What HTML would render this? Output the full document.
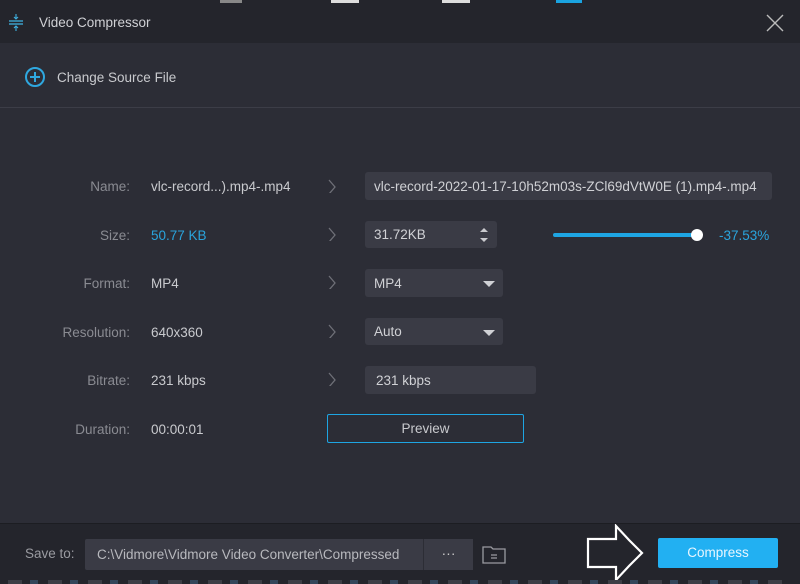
<!DOCTYPE html>
<html><head><meta charset="utf-8"><style>
*{margin:0;padding:0;box-sizing:border-box}
body{width:800px;height:584px;overflow:hidden;background:#2c2d36;font-family:"Liberation Sans",sans-serif;position:relative;color:#c9cace}
.abs{position:absolute}
.top{left:0;top:0;width:800px;height:43px;background:#24252c}
.lbl{font-size:13.5px;color:#8a8b92;text-align:right;width:130px;left:0}
.val{font-size:13.5px;color:#c9cace;left:151px}
.chev{left:327px;width:10px;height:14px}
.box{background:#3a3b45;border-radius:3px;font-size:13.5px;color:#d0d1d5;padding-left:9px;display:flex;align-items:center}
.tri{position:absolute;right:8px;top:12px;width:0;height:0;border-left:6px solid transparent;border-right:6px solid transparent;border-top:6px solid #d0d1d5}
</style></head><body>
<div class="abs top"></div>
<div class="abs" style="left:220px;top:0;width:22px;height:3px;background:#888"></div>
<div class="abs" style="left:331px;top:0;width:28px;height:3px;background:#ddd"></div>
<div class="abs" style="left:442px;top:0;width:28px;height:3px;background:#ddd"></div>
<div class="abs" style="left:556px;top:0;width:26px;height:3px;background:#1aa3e0"></div>
<svg class="abs" style="left:8px;top:12px" width="16" height="20"><line x1="1" y1="9" x2="15" y2="9" stroke="#3fb0e0" stroke-width="1.3"/><line x1="1" y1="12" x2="15" y2="12" stroke="#3fb0e0" stroke-width="1.3"/><path d="M8 2v5M6 5l2 2 2-2M8 19v-5M6 16l2-2 2 2" stroke="#3fb0e0" fill="none" stroke-width="1.1"/></svg>
<div class="abs" style="left:39px;top:15px;font-size:13.5px;color:#d0d1d5">Video Compressor</div>
<svg class="abs" style="left:766px;top:14px" width="18" height="18"><path d="M1 1L17 17M17 1L1 17" stroke="#bbb" stroke-width="1.4"/></svg>
<div class="abs" style="left:0;top:107px;width:800px;height:1px;background:#3c3d47"></div>
<svg class="abs" style="left:24px;top:66px" width="22" height="22"><circle cx="11" cy="11" r="9" stroke="#2fa8e0" stroke-width="2" fill="none"/><path d="M11 6v10M6 11h10" stroke="#2fa8e0" stroke-width="2"/></svg>
<div class="abs" style="left:57px;top:70px;font-size:13.5px;color:#c9cace">Change Source File</div>

<div class="abs lbl" style="top:179px">Name:</div><div class="abs val" style="top:179px">vlc-record...).mp4-.mp4</div>
<div class="abs lbl" style="top:228px">Size:</div><div class="abs val" style="top:228px;color:#2aa4dc">50.77 KB</div>
<div class="abs lbl" style="top:276px">Format:</div><div class="abs val" style="top:276px">MP4</div>
<div class="abs lbl" style="top:325px">Resolution:</div><div class="abs val" style="top:325px">640x360</div>
<div class="abs lbl" style="top:373px">Bitrate:</div><div class="abs val" style="top:373px">231 kbps</div>
<div class="abs lbl" style="top:422px">Duration:</div><div class="abs val" style="top:422px">00:00:01</div>

<svg class="abs chev" style="top:179px" width="10" height="16"><path d="M2 1l6 7-6 7" stroke="#6e6f77" fill="none" stroke-width="1.3"/></svg>
<svg class="abs chev" style="top:227px" width="10" height="16"><path d="M2 1l6 7-6 7" stroke="#6e6f77" fill="none" stroke-width="1.3"/></svg>
<svg class="abs chev" style="top:275px" width="10" height="16"><path d="M2 1l6 7-6 7" stroke="#6e6f77" fill="none" stroke-width="1.3"/></svg>
<svg class="abs chev" style="top:324px" width="10" height="16"><path d="M2 1l6 7-6 7" stroke="#6e6f77" fill="none" stroke-width="1.3"/></svg>
<svg class="abs chev" style="top:372px" width="10" height="16"><path d="M2 1l6 7-6 7" stroke="#6e6f77" fill="none" stroke-width="1.3"/></svg>

<div class="abs box" style="left:365px;top:172px;width:407px;height:28px;white-space:nowrap;overflow:hidden">vlc-record-2022-01-17-10h52m03s-ZCl69dVtW0E (1).mp4-.mp4</div>
<div class="abs box" style="left:365px;top:221px;width:132px;height:27px">31.72KB
<svg style="position:absolute;right:8px;top:6px" width="10" height="16"><path d="M1 5l4-4 4 4zM1 11l4 4 4-4z" fill="#c9cace"/></svg></div>
<div class="abs" style="left:553px;top:233px;width:144px;height:4px;background:#1ea5e3;border-radius:2px"></div>
<div class="abs" style="left:691px;top:229px;width:12px;height:12px;background:#fff;border-radius:50%"></div>
<div class="abs" style="left:719px;top:228px;font-size:13.5px;color:#2aa4dc">-37.53%</div>
<div class="abs box" style="left:365px;top:269px;width:138px;height:28px">MP4<span class="tri"></span></div>
<div class="abs box" style="left:365px;top:318px;width:138px;height:27px">Auto<span class="tri"></span></div>
<div class="abs box" style="left:365px;top:366px;width:171px;height:28px;padding-left:11px">231 kbps</div>
<div class="abs" style="left:327px;top:414px;width:197px;height:29px;border:1px solid #1ea5e3;border-radius:2px;font-size:13.5px;color:#c9cace;text-align:center;line-height:27px">Preview</div>

<div class="abs" style="left:0;top:523px;width:800px;height:61px;background:#24252c;border-top:1px solid #1c1d22"></div>
<div class="abs" style="left:25px;top:546px;font-size:13.5px;color:#9a9ba1">Save to:</div>
<div class="abs box" style="left:85px;top:539px;width:338px;height:31px;padding-left:12px;color:#b8b9be;border-radius:2px 0 0 2px;white-space:nowrap">C:\Vidmore\Vidmore Video Converter\Compressed</div>
<div class="abs" style="left:423px;top:539px;width:50px;height:31px;background:#3a3b45;border-left:1px solid #2c2d35;color:#ccc;text-align:center;font-size:14px;line-height:29px">···</div>
<svg class="abs" style="left:481px;top:543px" width="26" height="22"><path d="M2 4h8l2 2h12v14H2z" stroke="#9a9ba1" fill="none" stroke-width="1.3"/><path d="M10 12h6M10 15h6" stroke="#9a9ba1" stroke-width="1.2"/></svg>
<svg class="abs" style="left:586px;top:524px" width="60" height="60"><path d="M2 15h28V2l13 14 13 13-13 13-13 14V43H2z" fill="#24252c" stroke="#fff" stroke-width="2.2" transform="translate(0,0) scale(1,1)"/></svg>
<div class="abs" style="left:658px;top:538px;width:120px;height:30px;background:#22b0f2;border-radius:2px;color:#e8f6ff;font-size:13.5px;text-align:center;line-height:30px">Compress</div>
<div class="abs" style="left:8px;top:580px;width:780px;height:4px;background:repeating-linear-gradient(90deg,#3d3e46 0 14px,transparent 14px 22px,#33455a 22px 30px,transparent 30px 40px)"></div>
</body></html>
